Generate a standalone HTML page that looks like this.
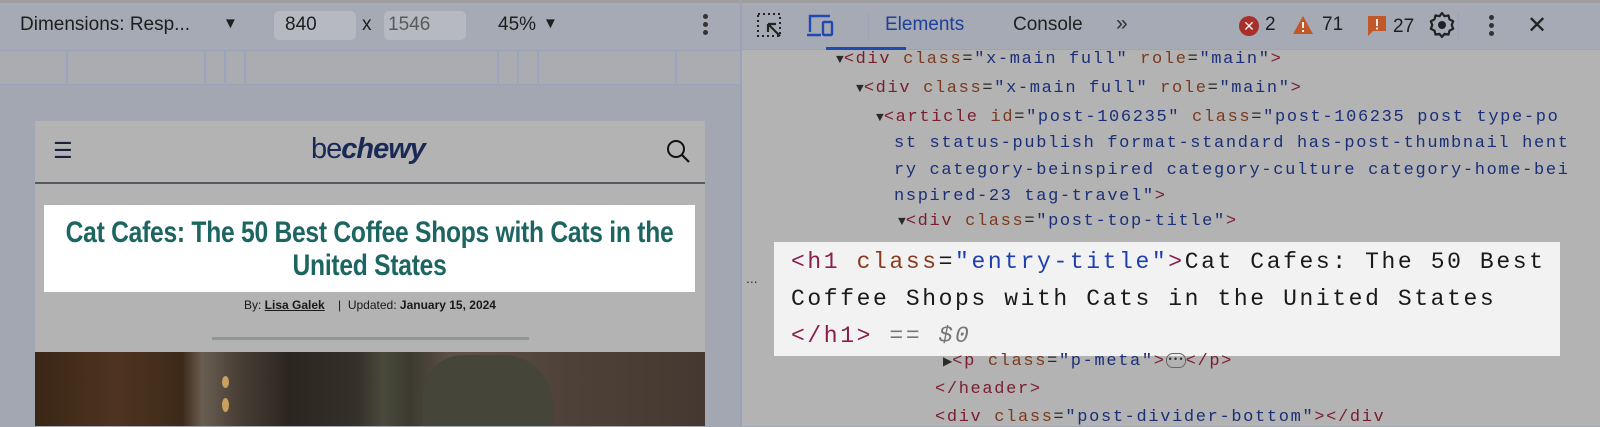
<!DOCTYPE html>
<html><head><style>
*{margin:0;padding:0;box-sizing:border-box}
body{width:1600px;height:426px;overflow:hidden;background:#a3a7b1;font-family:"Liberation Sans",sans-serif;position:relative}
.a{position:absolute;white-space:nowrap}
.mono{font-family:"Liberation Mono",monospace;font-size:17px;letter-spacing:1.65px;color:#2a2a2a}
.t{color:#7a1d2e}.at{color:#7b3a1e}.v{color:#1a2f78}
</style></head><body>
<div class="a" style="left:0;top:0;width:740px;height:3px;background:#9e9e9e"></div>
<div class="a" style="left:0;top:3px;width:740px;height:47px;background:#a6aab4"></div>
<div class="a" style="left:20px;top:14px;font-size:19px;color:#1e1e1e">Dimensions: Resp...</div>
<div class="a" style="left:223px;top:15px;font-size:15px;color:#1e1e1e">▼</div>
<div class="a" style="left:274px;top:11px;width:82px;height:29px;background:#b6b9c0;border-radius:5px"></div>
<div class="a" style="left:285px;top:14px;font-size:19px;color:#1e1e1e">840</div>
<div class="a" style="left:362px;top:14px;font-size:19px;color:#1e1e1e">x</div>
<div class="a" style="left:384px;top:11px;width:82px;height:29px;background:#b6b9c0;border-radius:5px"></div>
<div class="a" style="left:388px;top:14px;font-size:19px;color:#5a5a5a">1546</div>
<div class="a" style="left:498px;top:14px;font-size:19px;color:#1e1e1e">45%</div>
<div class="a" style="left:543px;top:15px;font-size:15px;color:#1e1e1e">▼</div>
<div class="a" style="left:703px;top:14px;width:5px;height:5px;border-radius:50%;background:#333;box-shadow:0 8px 0 #333,0 16px 0 #333"></div>
<div class="a" style="left:0;top:50px;width:740px;height:35px;background:#aaacb1;border-top:1px solid #9aa3b8;border-bottom:1px solid #9aa3b8"></div>
<div class="a" style="left:66px;top:51px;width:2px;height:32px;background:#9aa5c0"></div>
<div class="a" style="left:204px;top:51px;width:2px;height:32px;background:#9aa5c0"></div>
<div class="a" style="left:224px;top:51px;width:2px;height:32px;background:#9aa5c0"></div>
<div class="a" style="left:244px;top:51px;width:2px;height:32px;background:#9aa5c0"></div>
<div class="a" style="left:497px;top:51px;width:2px;height:32px;background:#9aa5c0"></div>
<div class="a" style="left:517px;top:51px;width:2px;height:32px;background:#9aa5c0"></div>
<div class="a" style="left:537px;top:51px;width:2px;height:32px;background:#9aa5c0"></div>
<div class="a" style="left:675px;top:51px;width:2px;height:32px;background:#9aa5c0"></div>
<div class="a" style="left:35px;top:121px;width:670px;height:305px;background:#b3b3b3"></div>
<div class="a" style="left:35px;top:182px;width:670px;height:2px;background:#555a60"></div>
<div class="a" style="left:53px;top:138px;font-size:22px;color:#1b2240">☰</div>
<div class="a" style="left:311px;top:133px;font-size:29px;color:#1b2a55;letter-spacing:-1px"><span style="font-weight:300">be</span><span style="font-weight:900;font-style:italic">chewy</span></div>
<svg class="a" style="left:666px;top:139px" width="26" height="26" viewBox="0 0 26 26"><circle cx="10" cy="10" r="8" fill="none" stroke="#111" stroke-width="2"/><path d="M16 16L23 23" stroke="#111" stroke-width="2.2"/></svg>
<div class="a" style="left:44px;top:205px;width:651px;height:87px;background:#fff"></div>
<div class="a" style="left:44px;top:216px;width:794px;text-align:center;font-size:30px;line-height:33px;font-weight:bold;color:#1d6560;transform:scaleX(0.82);transform-origin:0 0;letter-spacing:-0.3px">Cat Cafes: The 50 Best Coffee Shops with Cats in the<br>United States</div>
<div class="a" style="left:244px;top:298px;font-size:12px;color:#1a1a1a">By: <b style="text-decoration:underline">Lisa Galek</b> &nbsp;&nbsp;&nbsp;| &nbsp;Updated: <b>January 15, 2024</b></div>
<div class="a" style="left:212px;top:337px;width:317px;height:3px;background:#8e9898"></div>
<div class="a" style="left:35px;top:352px;width:670px;height:74px;background:linear-gradient(90deg,#3a2616 0%,#4e3420 12%,#3e2a1a 22%,#6a5e52 25%,#4a4036 30%,#2c2620 38%,#34302a 48%,#4a4a3c 52%,#3b3a2e 56%,#5e5048 62%,#4e4238 80%,#443830 100%)"></div>
<div class="a" style="left:423px;top:355px;width:130px;height:71px;background:#46453a;border-radius:40px 50px 0 0"></div>
<div class="a" style="left:222px;top:376px;width:7px;height:12px;border-radius:50%;background:#c9a060"></div>
<div class="a" style="left:222px;top:398px;width:7px;height:14px;border-radius:50%;background:#c9a060"></div>
<div class="a" style="left:740px;top:0;width:860px;height:3px;background:#9e9e9e"></div>
<div class="a" style="left:740px;top:3px;width:860px;height:47px;background:#a6aab4;border-bottom:1px solid #9aa3b8"></div>
<div class="a" style="left:740px;top:0;width:2px;height:426px;background:#9aa3b8"></div>
<div class="a" style="left:742px;top:50px;width:858px;height:376px;background:#b3b3b3"></div>
<svg class="a" style="left:756px;top:12px" width="30" height="28" viewBox="0 0 30 28"><rect x="2" y="2" width="22" height="22" fill="none" stroke="#222" stroke-width="2" stroke-dasharray="2 3"/><path d="M12 12L24 24M12 12h8M12 12v8" stroke="#222" stroke-width="2.2" fill="none"/></svg>
<svg class="a" style="left:806px;top:14px" width="30" height="24" viewBox="0 0 30 24"><path d="M4 18V2h20M1 21h14" stroke="#1f4bb0" stroke-width="2.4" fill="none"/><rect x="17" y="8" width="9" height="13" rx="1" fill="none" stroke="#1f4bb0" stroke-width="2.4"/></svg>
<div class="a" style="left:868px;top:12px;width:1px;height:28px;background:#9aa3b8"></div>
<div class="a" style="left:885px;top:14px;font-size:19px;color:#1f3f99">Elements</div>
<div class="a" style="left:826px;top:47px;width:80px;height:3px;background:#1f4bb0"></div>
<div class="a" style="left:1013px;top:14px;font-size:19px;color:#222">Console</div>
<div class="a" style="left:1116px;top:12px;font-size:21px;color:#333">»</div>
<div class="a" style="left:1239px;top:16px;width:20px;height:20px;border-radius:50%;background:#a8302a;color:#eee;font-size:14px;text-align:center;line-height:20px">✕</div>
<div class="a" style="left:1265px;top:14px;font-size:19px;color:#1e1e1e">2</div>
<svg class="a" style="left:1292px;top:15px" width="22" height="20"><path d="M11 1L21 19H1Z" fill="#c0582a"/><path d="M11 7v6M11 15v2" stroke="#eee" stroke-width="2"/></svg>
<div class="a" style="left:1322px;top:14px;font-size:19px;color:#1e1e1e">71</div>
<svg class="a" style="left:1367px;top:15px" width="20" height="22"><path d="M1 1h18v15H6l-5 5Z" fill="#c0582a"/><path d="M10 4v7M10 12.5v2" stroke="#eee" stroke-width="2"/></svg>
<div class="a" style="left:1393px;top:16px;font-size:19px;color:#1e1e1e">27</div>
<div class="a" style="left:1458px;top:12px;width:1px;height:28px;background:#9aa3b8"></div>
<svg class="a" style="left:1428px;top:11px" width="28" height="28" viewBox="0 0 28 28"><path d="M14 2l2.5 3.2 4-.8 1 4 3.7 1.8-1.5 3.8 1.5 3.8-3.7 1.8-1 4-4-.8L14 26l-2.5-3.2-4 .8-1-4-3.7-1.8L4.3 14 2.8 10.2l3.7-1.8 1-4 4 .8Z" fill="none" stroke="#222" stroke-width="2.2" stroke-linejoin="round"/><circle cx="14" cy="14" r="4" fill="#222"/></svg>
<div class="a" style="left:1489px;top:15px;width:5px;height:5px;border-radius:50%;background:#333;box-shadow:0 8px 0 #333,0 16px 0 #333"></div>
<div class="a" style="left:1527px;top:11px;font-size:24px;color:#222">✕</div>
<div class="a mono" style="left:836px;top:50px"><span style="font-size:13px;letter-spacing:0">▼</span><span class="t">&lt;div</span> <span class="at">class</span>=<span class="v">"x-main full"</span> <span class="at">role</span>=<span class="v">"main"</span><span class="t">&gt;</span></div>
<div class="a mono" style="left:856px;top:79px"><span style="font-size:13px;letter-spacing:0">▼</span><span class="t">&lt;div</span> <span class="at">class</span>=<span class="v">"x-main full"</span> <span class="at">role</span>=<span class="v">"main"</span><span class="t">&gt;</span></div>
<div class="a mono" style="left:876px;top:108px"><span style="font-size:13px;letter-spacing:0">▼</span><span class="t">&lt;article</span> <span class="at">id</span>=<span class="v">"post-106235"</span> <span class="at">class</span>=<span class="v">"post-106235 post type-po</span></div>
<div class="a mono v" style="left:894px;top:134px;color:#1a2f78">st status-publish format-standard has-post-thumbnail hent</div>
<div class="a mono v" style="left:894px;top:161px;color:#1a2f78">ry category-beinspired category-culture category-home-bei</div>
<div class="a mono" style="left:894px;top:187px"><span class="v">nspired-23 tag-travel"</span><span class="t">&gt;</span></div>
<div class="a mono" style="left:898px;top:212px"><span style="font-size:13px;letter-spacing:0">▼</span><span class="t">&lt;div</span> <span class="at">class</span>=<span class="v">"post-top-title"</span><span class="t">&gt;</span></div>
<div class="a" style="left:742px;top:270px;width:32px;height:30px;color:#333;font-size:14px;padding-left:4px">...</div>
<div class="a" style="left:774px;top:242px;width:786px;height:114px;background:#f2f2f2"></div>
<div class="a mono" style="left:791px;top:244px;font-size:23px;letter-spacing:2.6px;line-height:37px;color:#1a1a1a"><span style="color:#8a1d4e">&lt;h1</span> <span style="color:#8a3a1e">class</span>=<span style="color:#1f3fb0">"entry-title"</span><span style="color:#8a1d4e">&gt;</span>Cat Cafes: The 50 Best<br>Coffee Shops with Cats in the United States<br><span style="color:#8a1d4e">&lt;/h1&gt;</span> <span style="color:#777">== <i>$0</i></span></div>
<div class="a mono" style="left:943px;top:352px"><span style="font-size:12px;letter-spacing:0">▶</span><span class="t">&lt;p</span> <span class="at">class</span>=<span class="v">"p-meta"</span><span class="t">&gt;</span><span style="display:inline-block;width:20px;height:15px;border:1px solid #666;border-radius:7px;font-size:9px;line-height:12px;letter-spacing:0;text-align:center;vertical-align:middle">•••</span><span class="t">&lt;/p&gt;</span></div>
<div class="a mono" style="left:935px;top:380px"><span class="t">&lt;/header&gt;</span></div>
<div class="a mono" style="left:935px;top:408px"><span class="t">&lt;div</span> <span class="at">class</span>=<span class="v">"post-divider-bottom"</span><span class="t">&gt;&lt;/div</span></div>
</body></html>
